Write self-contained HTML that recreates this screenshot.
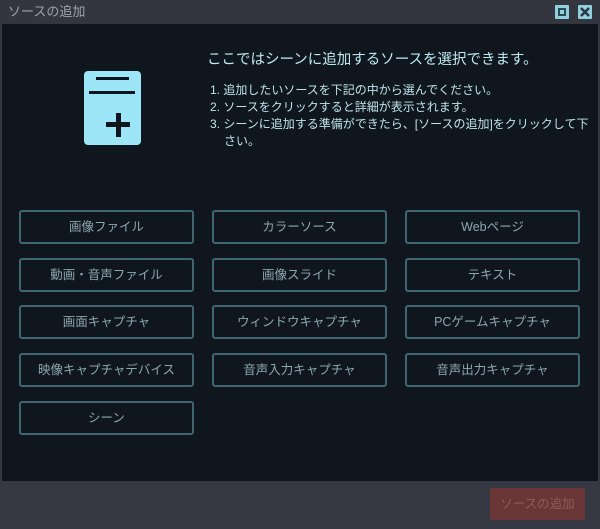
<!DOCTYPE html>
<html><head><meta charset="utf-8"><style>
*{margin:0;padding:0;box-sizing:border-box}
body{width:600px;height:529px;background:#353842;position:relative;overflow:hidden;font-family:"Liberation Sans","Noto Sans CJK JP",sans-serif}
.title{position:absolute;left:0;top:0;width:600px;height:24px;background:#33363f;color:#9aa3ad;font-size:13px;line-height:24px;padding-left:8px}
.ic{position:absolute;top:5px;width:14px;height:14px;background:#8fd0dc;border-radius:1px}
.main{position:absolute;left:2px;top:24px;width:596px;height:457px;background:#10161d}
.h{position:absolute;left:207px;top:48px;color:#bfeaf2;font-size:14.5px}
.list{position:absolute;left:210px;top:82px;color:#bfe3ea;font-size:12px;line-height:17px;width:390px;white-space:nowrap}
.list div{padding-left:14px;text-indent:-14px}
.b{position:absolute;width:175px;height:34px;border:2px solid #3f6670;border-radius:3px;color:#8da7b0;font-size:12.5px;text-align:center;line-height:30px}
.foot{position:absolute;left:490px;top:488px;width:95px;height:32px;background:#6a3537;border-radius:2px;color:#8d5a5d;font-size:12.5px;text-align:center;line-height:32px}
</style></head><body>
<div class="title">ソースの追加</div>
<div class="ic" style="left:555px"><svg width="14" height="14"><rect x="3" y="3" width="8" height="8" fill="#2a4a55"/><rect x="5" y="5" width="4" height="4" fill="#8fd0dc"/></svg></div>
<div class="ic" style="left:578px"><svg width="14" height="14"><path d="M3 3L11 11M11 3L3 11" stroke="#2a3a45" stroke-width="2.5"/></svg></div>
<div class="main"></div>
<svg style="position:absolute;left:84px;top:71px" width="58" height="75"><rect x="0" y="0" width="57" height="74" rx="4" fill="#9ce6f7"/><rect x="12" y="6" width="33" height="3" fill="#10161d"/><rect x="5" y="20" width="46" height="3" fill="#10161d"/><rect x="32" y="42" width="5" height="24" fill="#10161d"/><rect x="22" y="51" width="24" height="5" fill="#10161d"/></svg>
<div class="h">ここではシーンに追加するソースを選択できます。</div>
<div class="list">
<div>1. 追加したいソースを下記の中から選んでください。</div>
<div>2. ソースをクリックすると詳細が表示されます。</div>
<div>3. シーンに追加する準備ができたら、[ソースの追加]をクリックして下<br>さい。</div>
</div>
<div class="b" style="left:19px;top:210px">画像ファイル</div>
<div class="b" style="left:212px;top:210px">カラーソース</div>
<div class="b" style="left:405px;top:210px">Webページ</div>
<div class="b" style="left:19px;top:258px">動画・音声ファイル</div>
<div class="b" style="left:212px;top:258px">画像スライド</div>
<div class="b" style="left:405px;top:258px">テキスト</div>
<div class="b" style="left:19px;top:305px">画面キャプチャ</div>
<div class="b" style="left:212px;top:305px">ウィンドウキャプチャ</div>
<div class="b" style="left:405px;top:305px">PCゲームキャプチャ</div>
<div class="b" style="left:19px;top:353px">映像キャプチャデバイス</div>
<div class="b" style="left:212px;top:353px">音声入力キャプチャ</div>
<div class="b" style="left:405px;top:353px">音声出力キャプチャ</div>
<div class="b" style="left:19px;top:401px">シーン</div>
<div class="foot">ソースの追加</div>
</body></html>
